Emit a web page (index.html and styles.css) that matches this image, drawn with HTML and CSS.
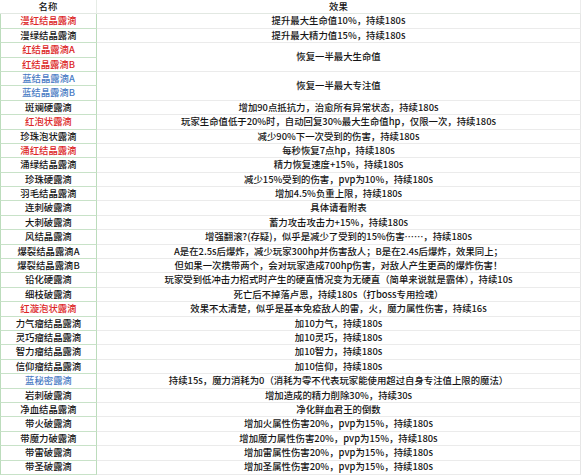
FILE: index.html
```html
<!DOCTYPE html>
<html lang="zh-CN">
<head>
<meta charset="utf-8">
<title>露滴效果</title>
<link rel="stylesheet" href="styles.css">
</head>
<body>
<div class="sheet">
  <div class="head name-h">名称</div><div class="head eff-h">效果</div>
  <div class="name red">漫红结晶露滴</div><div class="eff">提升最大生命值10%，持续180s</div>
  <div class="name">漫绿结晶露滴</div><div class="eff">提升最大精力值15%，持续180s</div>
  <div class="name red">红结晶露滴A</div><div class="eff span2">恢复一半最大生命值</div>
  <div class="name red">红结晶露滴B</div>
  <div class="name blue">蓝结晶露滴A</div><div class="eff span2">恢复一半最大专注值</div>
  <div class="name blue">蓝结晶露滴B</div>
  <div class="name">斑斓硬露滴</div><div class="eff">增加90点抵抗力，治愈所有异常状态，持续180s</div>
  <div class="name red">红泡状露滴</div><div class="eff">玩家生命值低于20%时，自动回复30%最大生命值hp，仅限一次，持续180s</div>
  <div class="name">珍珠泡状露滴</div><div class="eff">减少90%下一次受到的伤害，持续180s</div>
  <div class="name red">涌红结晶露滴</div><div class="eff">每秒恢复7点hp，持续180s</div>
  <div class="name">涌绿结晶露滴</div><div class="eff">精力恢复速度+15%，持续180s</div>
  <div class="name">珍珠硬露滴</div><div class="eff">减少15%受到的伤害，pvp为10%，持续180s</div>
  <div class="name">羽毛结晶露滴</div><div class="eff">增加4.5%负重上限，持续180s</div>
  <div class="name">连刺破露滴</div><div class="eff">具体请看附表</div>
  <div class="name">大刺破露滴</div><div class="eff">蓄力攻击攻击力+15%，持续180s</div>
  <div class="name">风结晶露滴</div><div class="eff">增强翻滚?(存疑)，似乎是减少了受到的15%伤害……，持续180s</div>
  <div class="name">爆裂结晶露滴A</div><div class="eff">A是在2.5s后爆炸，减少玩家300hp并伤害敌人；B是在2.4s后爆炸，效果同上；</div>
  <div class="name">爆裂结晶露滴B</div><div class="eff">但如果一次携带两个，会对玩家造成700hp伤害，对敌人产生更高的爆炸伤害！</div>
  <div class="name">铅化硬露滴</div><div class="eff">玩家受到低冲击力招式时产生的硬直情况变为无硬直（简单来说就是霸体），持续10s</div>
  <div class="name">细枝破露滴</div><div class="eff">死亡后不掉落卢恩，持续180s（打boss专用捡魂）</div>
  <div class="name red">红漩泡状露滴</div><div class="eff">效果不太清楚，似乎是基本免疫敌人的雷，火，魔力属性伤害，持续16s</div>
  <div class="name">力气瘤结晶露滴</div><div class="eff">加10力气，持续180s</div>
  <div class="name">灵巧瘤结晶露滴</div><div class="eff">加10灵巧，持续180s</div>
  <div class="name">智力瘤结晶露滴</div><div class="eff">加10智力，持续180s</div>
  <div class="name">信仰瘤结晶露滴</div><div class="eff">加10信仰，持续180s</div>
  <div class="name blue">蓝秘密露滴</div><div class="eff">持续15s，魔力消耗为0（消耗为零不代表玩家能使用超过自身专注值上限的魔法）</div>
  <div class="name">岩刺破露滴</div><div class="eff">增加造成的精力削除30%，持续30s</div>
  <div class="name">净血结晶露滴</div><div class="eff">净化鲜血君王的倒数</div>
  <div class="name">带火破露滴</div><div class="eff">增加火属性伤害20%，pvp为15%，持续180s</div>
  <div class="name">带魔力破露滴</div><div class="eff">增加魔力属性伤害20%，pvp为15%，持续180s</div>
  <div class="name">带雷破露滴</div><div class="eff">增加雷属性伤害20%，pvp为15%，持续180s</div>
  <div class="name">带圣破露滴</div><div class="eff">增加圣属性伤害20%，pvp为15%，持续180s</div>
</div>
</body>
</html>
```

FILE: styles.css
```css
html, body {
  margin: 0;
  padding: 0;
  background: #ffffff;
}

body {
  font-family: "Noto Sans CJK SC", "Noto Sans", sans-serif;
  font-size: 9.4px;
  font-weight: 500;
  color: #141414;
}

.sheet {
  display: grid;
  grid-template-columns: 97px 484px;
  grid-auto-rows: 14.4px;
  width: 581px;
}

.sheet > div {
  box-sizing: border-box;
  display: flex;
  align-items: center;
  justify-content: center;
  white-space: nowrap;
  overflow: hidden;
  line-height: 1;
}

.head {
  border-bottom: 1px solid #e2e8e2;
}

.name-h {
  border-right: 1px solid #e6ece6;
}

.eff-h {
  border-right: 1px solid #ececec;
}

.name {
  border-left: 1px solid #bcdcbc;
  border-right: 1px solid #bcdcbc;
  border-bottom: 1px solid #c8e2c8;
}

.eff {
  border-right: 1px solid #e6e6e6;
  border-bottom: 1px solid #ebebeb;
}

.span2 {
  grid-row: span 2;
}

.red {
  color: #dc2626;
}

.blue {
  color: #4a7cc4;
}
```
